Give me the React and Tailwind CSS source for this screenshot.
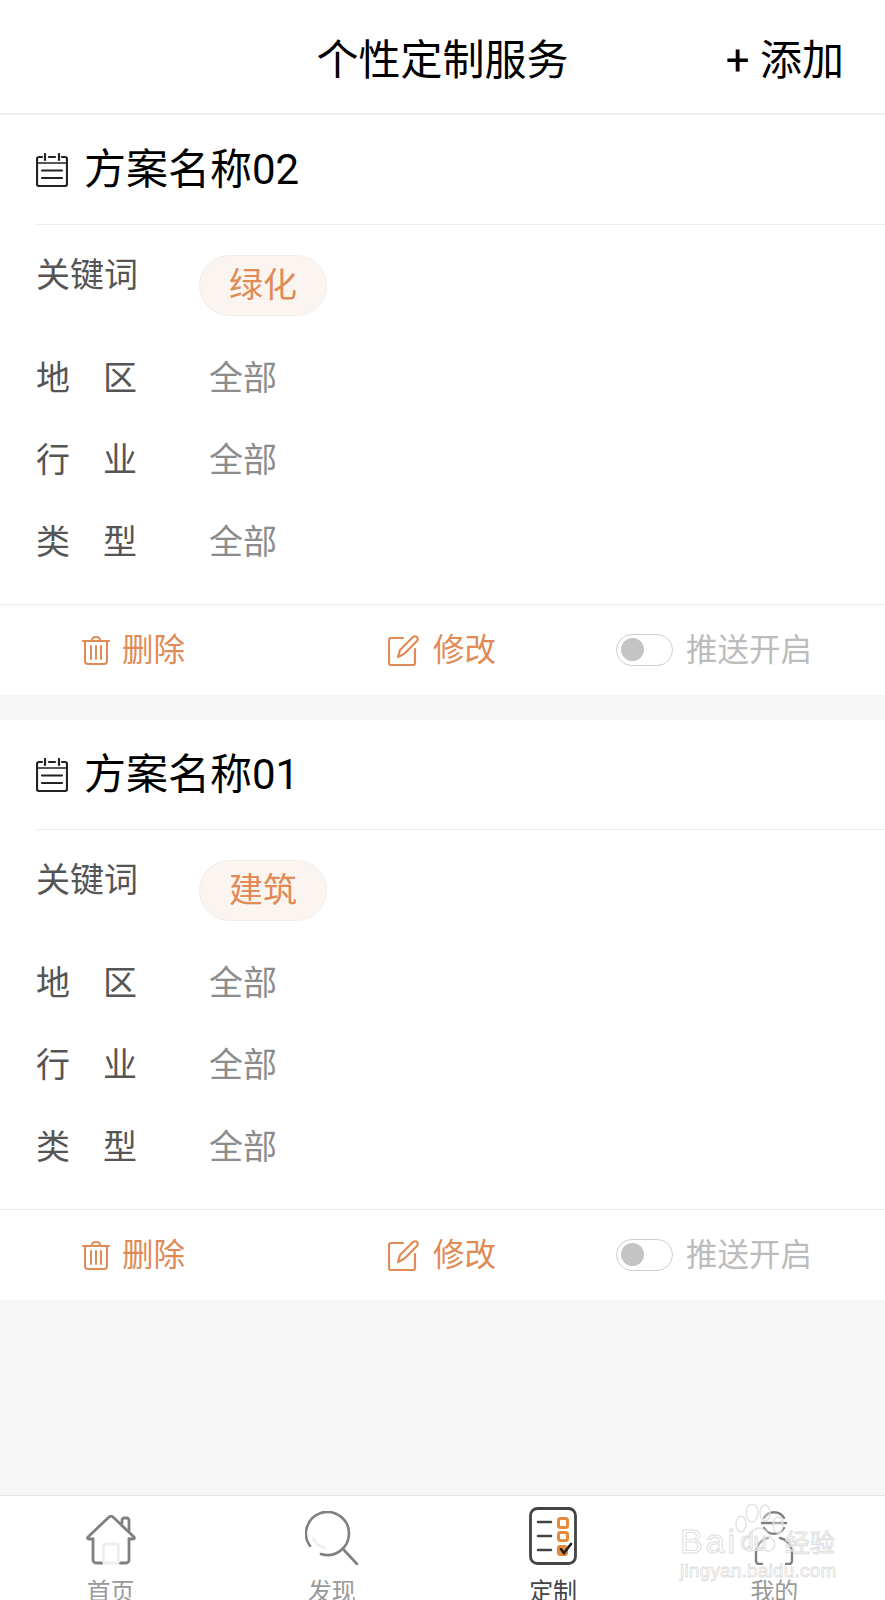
const FONT = "font-['Roboto','Noto_Sans_CJK_SC',sans-serif]";

function PlanIcon() {
  return (
    <svg width="32" height="34" viewBox="0 0 32 34" fill="none" stroke="#222" strokeWidth="2.2" strokeLinecap="round" strokeLinejoin="round">
      <path d="M6 4H3a2 2 0 0 0-2 2v25a2 2 0 0 0 2 2h26a2 2 0 0 0 2-2V6a2 2 0 0 0-2-2h-3" />
      <path d="M13 4h6M9 1v6M23 1v6" />
      <path d="M1.5 10h29" strokeWidth="1.6" />
      <path d="M6 17.5h20M6 25h20" />
    </svg>
  );
}

function TrashIcon() {
  return (
    <svg width="28" height="30" viewBox="0 0 28 30" fill="none" stroke="#e08a55" strokeWidth="2" strokeLinecap="round" strokeLinejoin="round">
      <path d="M1 6h26M10 5c0-2 1-3 4-3s4 1 4 3" />
      <path d="M3 6v20a3 3 0 0 0 3 3h16a3 3 0 0 0 3-3V6" />
      <path d="M9 11v13M14 11v13M19 11v13" />
    </svg>
  );
}

function EditIcon() {
  return (
    <svg width="32" height="32" viewBox="0 0 32 32" fill="none" stroke="#e08a55" strokeWidth="2.2" strokeLinecap="round" strokeLinejoin="round">
      <path d="M15 4H3a2 2 0 0 0-2 2v23a2 2 0 0 0 2 2h22a2 2 0 0 0 2-2V15" />
      <path d="M10 23l2-7L25 3c1-1 3-1 4 0s1 3 0 4L16 20z" />
    </svg>
  );
}

function Row({ a, b }) {
  return (
    <div className="flex items-center h-[82px]">
      <div className="w-[101px] flex justify-between text-[34px] leading-none text-[#555]">
        <span>{a}</span>
        <span>{b}</span>
      </div>
      <div className="ml-[72px] text-[34px] leading-none text-[#8c8c8c]">全部</div>
    </div>
  );
}

function Card({ name, tag }) {
  return (
    <section className="bg-white">
      <div className="pl-[36px]">
        <div className="h-[110px] flex items-center gap-[16px] border-b border-[#ececec]">
          <PlanIcon />
          <span className="text-[42px] leading-none text-black">{name}</span>
        </div>
      </div>
      <div className="pl-[36px] pt-[30px] pb-[21px] border-b border-[#e8e8e8]">
        <div className="flex items-start h-[61px]">
          <span className="w-[163px] text-[34px] leading-none pt-[3px] text-[#555]">关键词</span>
          <span className="w-[128px] h-[61px] pb-[2px] rounded-full bg-[#fbf5f1] border border-[#f5ece6] flex items-center justify-center text-[34px] leading-none text-[#e08a55]">{tag}</span>
        </div>
        <div className="pt-[21px]">
          <Row a="地" b="区" />
          <Row a="行" b="业" />
          <Row a="类" b="型" />
        </div>
      </div>
      <div className="h-[90px] flex items-center pb-[1px]">
        <div className="w-[310px] pl-[82px] flex items-center gap-[12px] text-[31.5px] leading-none text-[#e08a55]">
          <TrashIcon />
          <span className="pt-[2px]">删除</span>
        </div>
        <div className="w-[306px] pl-[78px] flex items-center gap-[13px] text-[31.5px] leading-none text-[#e08a55]">
          <EditIcon />
          <span className="pt-[2px]">修改</span>
        </div>
        <div className="flex items-center gap-[13px] text-[31.5px] leading-none text-[#bcbcbc]">
          <span className="w-[57px] h-[32px] rounded-full border border-[#cfcfcf] flex items-center pl-[4px]">
            <span className="w-[23px] h-[23px] rounded-full bg-[#c4c4c4]" />
          </span>
          <span className="pt-[2px]">推送开启</span>
        </div>
      </div>
    </section>
  );
}

function HomeIcon() {
  return (
    <svg width="50" height="50" viewBox="0 2 50 50" fill="none" stroke="#808080" strokeWidth="2.8" strokeLinecap="round" strokeLinejoin="round">
      <path d="M7 26v21a3 3 0 0 0 3 3h6M43 26v21a3 3 0 0 1-3 3h-6" />
      <path d="M7 26H3c-1 0-2-1-1-2L23 4c1-1 3-1 4 0l21 20c1 1 0 2-1 2h-4" />
      <path d="M36 10V7c0-1 1-2 2-2h3c1 0 2 1 2 2v11" />
      <rect x="17.5" y="31" width="15" height="19" rx="2" stroke="#eeeeee" />
    </svg>
  );
}

function SearchIcon() {
  return (
    <svg width="54" height="54" viewBox="0 0 54 54" fill="none" stroke="#808080" strokeWidth="2.6" strokeLinecap="round">
      <path d="M5 35A21.5 21.5 0 1 1 16 43" />
      <path d="M38 38l14 15" />
      <path d="M8 27c2 5 7 9 12 10" stroke="#eeeeee" />
    </svg>
  );
}

function PlanTabIcon() {
  return (
    <svg width="48" height="58" viewBox="0 0 48 58" fill="none" strokeLinecap="round">
      <rect x="1.5" y="1.5" width="45" height="55" rx="7" stroke="#444" strokeWidth="2.8" />
      <path d="M9 15h13M9 29h13M9 43h13" stroke="#444" strokeWidth="2.6" />
      <rect x="29.5" y="11.5" width="9" height="9" rx="2" stroke="#e58a3c" strokeWidth="3" />
      <rect x="29.5" y="25.5" width="9" height="8" rx="2" stroke="#e58a3c" strokeWidth="3" />
      <rect x="28" y="38" width="11" height="11" rx="3" fill="#e58a3c" />
      <path d="M32 42l3 4 7-9" stroke="#222" strokeWidth="2.6" />
    </svg>
  );
}

function UserIcon() {
  return (
    <svg width="42" height="56" viewBox="0 0 42 56" fill="none" stroke="#808080" strokeWidth="2.4" strokeLinecap="round">
      <path d="M11 9a11.5 11.5 0 0 1 20 0M9 14h24M11 19a11.5 11.5 0 0 0 20 0" />
      <path d="M9 55H6a3 3 0 0 1-3-3v-8c0-8 6-14 12-15M33 55h3a3 3 0 0 0 3-3v-8c0-8-6-14-12-15" />
    </svg>
  );
}

function Tab({ label, active, children }) {
  return (
    <div className="flex-1 flex flex-col items-center">
      <div className="h-[69px] shrink-0 flex items-end justify-center">{children}</div>
      <span className={`mt-[15px] shrink-0 text-[24px] leading-none whitespace-nowrap ${active ? "text-[#444]" : "text-[#999]"}`}>{label}</span>
    </div>
  );
}

function Watermark() {
  return (
    <div className="absolute left-[680px] top-[1504px] w-[160px] h-[76px] pointer-events-none">
      <svg className="absolute left-[52px] top-0" width="64" height="50" viewBox="0 0 64 50" fill="#ffffff" fillOpacity="0.35" stroke="#e0e0e0" strokeWidth="1.3">
        <ellipse cx="9" cy="20" rx="5" ry="8" />
        <ellipse cx="20" cy="9" rx="6" ry="9" />
        <ellipse cx="33" cy="9" rx="5" ry="8" />
        <ellipse cx="46" cy="21" rx="5" ry="8" />
        <path d="M27 24c7 0 10 8 14 12 4 5 0 12-6 11-4-1-12-1-16 0-6 1-10-6-6-11 4-4 7-12 14-12z" />
      </svg>
      <div className="absolute left-0 top-[20px] w-[160px] flex items-center text-[34px] leading-none text-white/40 font-['Liberation_Sans',sans-serif] [-webkit-text-stroke:1px_#dedede]">
        <span className="tracking-[3px]">Bai</span>
        <span className="text-[24px] ml-[2px]">du</span>
        <span className="text-[25px] ml-[18px] font-['Noto_Sans_CJK_SC',sans-serif]">经验</span>
      </div>
      <div className="absolute left-0 top-[57px] text-[19px] leading-none whitespace-nowrap text-white/40 font-['Liberation_Sans',sans-serif] [-webkit-text-stroke:0.8px_#dedede] tracking-[0.2px]">jingyan.baidu.com</div>
    </div>
  );
}

export default function App() {
  return (
    <div className={`relative h-[1600px] w-[885px] overflow-hidden bg-[#f6f6f6] flex flex-col ${FONT}`}>
      <header className="h-[115px] shrink-0 bg-white border-b-2 border-[#ececec] flex items-center relative">
        <h1 className="w-full text-center text-[42px] leading-none font-normal text-black pt-[8px]">个性定制服务</h1>
        <span className="absolute right-[41px] top-[40px] text-[42px] leading-none text-black">+ 添加</span>
      </header>
      <main className="flex-1 flex flex-col gap-[25px] min-h-0">
        <Card name="方案名称02" tag="绿化" />
        <Card name="方案名称01" tag="建筑" />
      </main>
      <nav className="h-[105px] shrink-0 bg-white border-t border-[#e6e6e6] flex overflow-hidden">
        <Tab label="首页"><HomeIcon /></Tab>
        <Tab label="发现"><SearchIcon /></Tab>
        <Tab label="定制" active><PlanTabIcon /></Tab>
        <Tab label="我的"><UserIcon /></Tab>
      </nav>
      <Watermark />
    </div>
  );
}
